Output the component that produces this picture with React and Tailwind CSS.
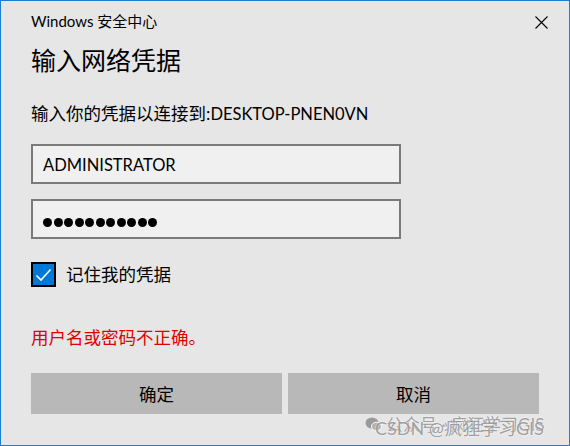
import React from "react";

const font = { fontFamily: '"Lato", "Noto Sans CJK SC", sans-serif' };

export default function App() {
  return (
    <div
      className="relative w-[570px] h-[446px] bg-[#e6e6e6] border border-[#1a7fd4] pl-[30px] pr-[30px] text-black overflow-hidden"
      style={font}
    >
      {/* TITLE BAR */}
      <div className="h-[40px] flex items-center justify-between">
        <span className="text-[15px] leading-none">Windows 安全中心</span>
        <CloseIcon />
      </div>

      <h1 className="mt-[2px] text-[25px] leading-[34px] font-normal">输入网络凭据</h1>

      <p className="mt-[25px] text-[17.5px] leading-[24px]">
        输入你的凭据以连接到:<span className="text-[16.5px]">DESKTOP-PNEN0VN</span>
      </p>

      {/* INPUTS */}
      <div className="mt-[18px] w-[370px] h-[40px] border-2 border-[#7a7a7a] bg-[#f0f0f0] flex items-center pl-[10px] pt-[3px] text-[16.5px]">
        ADMINISTRATOR
      </div>

      <div className="mt-[15px] w-[370px] h-[40px] border-2 border-[#7a7a7a] bg-[#f0f0f0] flex items-center pl-[10px] pt-[6px] gap-[1.5px]">
        {Array.from({ length: 11 }).map((_, i) => (
          <span key={i} className="w-[9px] h-[9px] rounded-full bg-black" />
        ))}
      </div>

      {/* REMEMBER */}
      <div className="mt-[23px] flex items-center gap-[10px]">
        <div className="w-[25px] h-[25px] border-2 border-black bg-[#0078d7] flex items-center justify-center">
          <svg width="17" height="14" viewBox="0 0 17 14" fill="none">
            <path d="M1.5 7.5 L6 12 L15.5 1.5" stroke="white" strokeWidth="1.6" />
          </svg>
        </div>
        <span className="text-[17.5px] leading-[24px]">记住我的凭据</span>
      </div>

      <p className="mt-[39px] text-[17.5px] leading-[24px] text-[#e00000]">用户名或密码不正确。</p>

      {/* BUTTONS */}
      <div className="mt-[23px] flex gap-[6px]">
        <button className="w-[251px] h-[41px] bg-[#b8b8b8] pt-[4px] text-[17.5px]">确定</button>
        <button className="w-[251px] h-[41px] bg-[#b8b8b8] pt-[4px] text-[17.5px]">取消</button>
      </div>

      {/* WATERMARK */}
      <div className="absolute left-[364px] top-[411px] flex items-center gap-[4px] text-[17px] text-[#8a8a8a]/80 [text-shadow:0_0_2px_#fff]">
        <svg width="17" height="15" viewBox="0 0 17 15">
          <ellipse cx="7" cy="6" rx="6.5" ry="5.5" fill="#9a9a9a" />
          <ellipse cx="11.5" cy="9.5" rx="5" ry="4.3" fill="#b0b0b0" stroke="#fff" strokeWidth="1" />
        </svg>
        <span>公众号 · 疯狂学习GIS</span>
      </div>
      <div className="absolute left-[374px] top-[414px] text-[18px] text-[#7a7a7a]/70 [text-shadow:0_0_2px_#fff]">
        CSDN @疯狂学习GIS
      </div>
    </div>
  );
}

function CloseIcon() {
  return (
    <svg width="13" height="13" viewBox="0 0 13 13" className="-mr-[9px] mt-[2px]">
      <path d="M0.5 0.5 L12.5 12.5 M12.5 0.5 L0.5 12.5" stroke="black" strokeWidth="1.1" />
    </svg>
  );
}
